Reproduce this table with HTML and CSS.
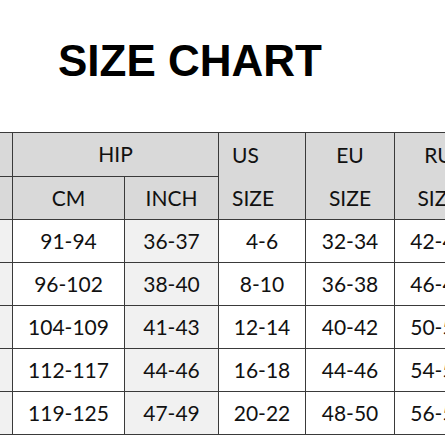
FILE: index.html
```html
<!DOCTYPE html>
<html>
<head>
<meta charset="utf-8">
<link rel="stylesheet" href="styles.css">
</head>
<body>
<div class="page">
  <h1 class="title">SIZE CHART</h1>
  <table class="chart">
    <colgroup>
      <col class="c-size">
      <col class="c-cm">
      <col class="c-inch">
      <col class="c-us">
      <col class="c-eu">
      <col class="c-ru">
    </colgroup>
    <thead>
      <tr>
        <th class="head"></th>
        <th class="head" colspan="2">HIP</th>
        <th class="head left" rowspan="2">US<br>SIZE</th>
        <th class="head" rowspan="2">EU<br>SIZE</th>
        <th class="head" rowspan="2">RU<br>SIZE</th>
      </tr>
      <tr>
        <th class="head"></th>
        <th class="head">CM</th>
        <th class="head">INCH</th>
      </tr>
    </thead>
    <tbody>
      <tr><td class="shade"></td><td>91-94</td><td class="shade">36-37</td><td>4-6</td><td>32-34</td><td>42-44</td></tr>
      <tr><td class="shade"></td><td>96-102</td><td class="shade">38-40</td><td>8-10</td><td>36-38</td><td>46-48</td></tr>
      <tr><td class="shade"></td><td>104-109</td><td class="shade">41-43</td><td>12-14</td><td>40-42</td><td>50-52</td></tr>
      <tr><td class="shade"></td><td>112-117</td><td class="shade">44-46</td><td>16-18</td><td>44-46</td><td>54-56</td></tr>
      <tr><td class="shade"></td><td>119-125</td><td class="shade">47-49</td><td>20-22</td><td>48-50</td><td>56-58</td></tr>
    </tbody>
  </table>
</div>
</body>
</html>
```
FILE: styles.css
```css
html, body {
  margin: 0;
  padding: 0;
  background: #ffffff;
}
body {
  width: 445px;
  height: 445px;
  overflow: hidden;
}
.page {
  width: 445px;
  overflow: hidden;
}
.title {
  margin: 0 0 46px 58px;
  padding-top: 36px;
  font-family: "Liberation Sans", Arial, sans-serif;
  font-weight: bold;
  font-size: 44px;
  line-height: 50px;
  color: #000;
  white-space: nowrap;
}
.chart {
  margin-left: -88px;
  border-collapse: collapse;
  table-layout: fixed;
  width: 570px;
  font-family: Lato, "Open Sans", sans-serif;
  font-size: 21px;
  color: #111;
}
.c-size { width: 100px; }
.c-cm { width: 112px; }
.c-inch { width: 94px; }
.c-us { width: 87px; }
.c-eu { width: 89px; }
.c-ru { width: 88px; }
.chart th,
.chart td {
  border: 1px solid #3a3a3a;
  height: 42px;
  padding: 0;
  text-align: center;
  vertical-align: middle;
  white-space: nowrap;
  font-weight: normal;
  line-height: 24px;
}
.chart th {
  background: #d9d9d9;
}
.chart th[rowspan] {
  line-height: 43px;
}
.chart th.left {
  text-align: left;
  padding-left: 13px;
}
.chart td {
  background: #fff;
}
.chart td.shade {
  background: #f1f1f1;
}
```
